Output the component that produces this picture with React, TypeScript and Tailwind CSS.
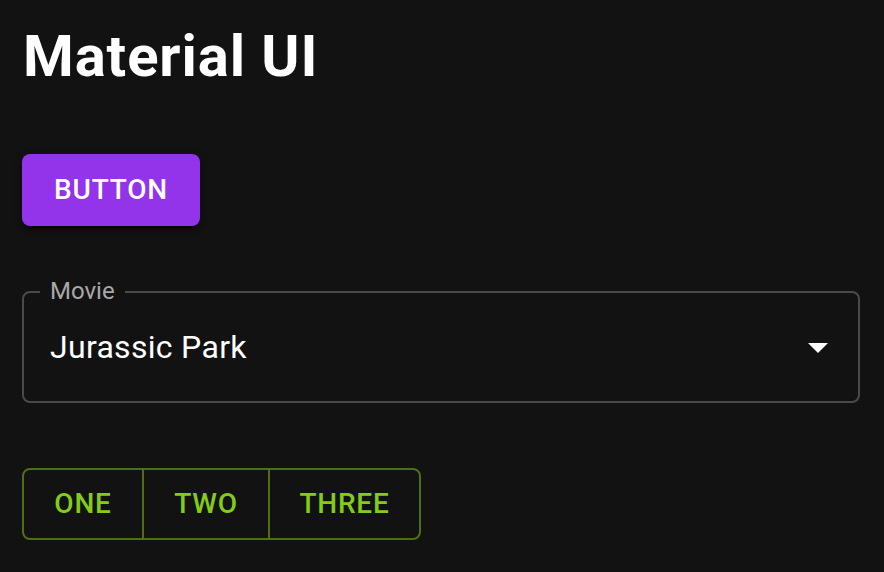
import React from "react";

export default function App() {
  return (
    <div
      className="min-h-[572px] w-full bg-[#121212] text-white pl-[22px] pr-[24px] pt-[14px]"
      style={{ fontFamily: "Roboto, 'Liberation Sans', sans-serif" }}
    >
      <h1 className="text-[58px] font-bold leading-[80px] tracking-[0.9px] m-0 pl-[1px] pt-[2px]">Material UI</h1>

      <button className="mt-[58px] h-[72px] w-[178px] rounded-[8px] bg-[#9333ea] text-white text-[28px] font-medium tracking-[0.8px] uppercase shadow-[0_6px_2px_-4px_rgba(0,0,0,0.4),0_4px_4px_0_rgba(0,0,0,0.28),0_2px_10px_0_rgba(0,0,0,0.24)] flex items-center justify-center">
        Button
      </button>

      <div className="relative mt-[65px] h-[112px] w-[838px]">
        <fieldset className="absolute inset-0 m-0 rounded-[8px] border-2 border-[#4a4a4a] px-[16px] pointer-events-none">
          <legend className="px-[10px] text-[24px] leading-[0px] text-[#a8a8a8] font-normal">
            <span className="relative top-[-1px]">Movie</span>
          </legend>
        </fieldset>
        <div className="relative flex h-full items-center pl-[28px] pr-[18px]">
          <span className="text-[32px] leading-[36px] text-white tracking-[0.3px]">Jurassic Park</span>
          <svg className="ml-auto" width="48" height="48" viewBox="0 0 24 24" fill="white">
            <path d="M7 10l5 5 5-5z" />
          </svg>
        </div>
      </div>

      <div className="mt-[65px] inline-flex h-[72px] rounded-[8px] border-2 border-[#4b7017] text-[28px] font-medium tracking-[0.8px] text-[#84cc16] uppercase">
        <div className="flex w-[118px] items-center justify-center">One</div>
        <div className="flex w-[126px] items-center justify-center border-l-2 border-[#4b7017]">Two</div>
        <div className="flex w-[151px] items-center justify-center border-l-2 border-[#4b7017]">Three</div>
      </div>
    </div>
  );
}
